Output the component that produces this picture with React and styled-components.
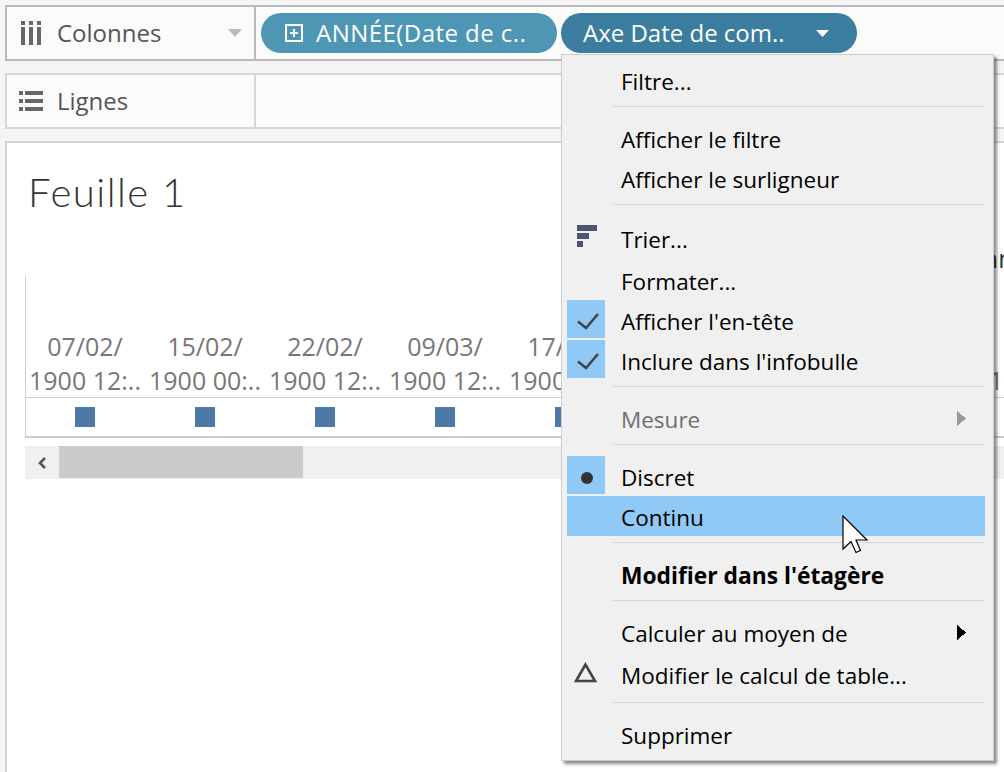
import React from 'react'
import styled, { createGlobalStyle } from 'styled-components';

const GlobalStyle = createGlobalStyle`
  html, body {
    margin: 0;
    padding: 0;
    background: #f5f5f5;
  }
`;

const Page = styled.div`
  position: relative;
  width: 1004px;
  height: 772px;
  overflow: hidden;
  box-sizing: border-box;
  padding: 5px 0 0 5px;
  background: #f5f5f5;
  font-family: "Open Sans", "Liberation Sans", sans-serif;
`;

const Shelf = styled.div`
  display: flex;
  box-sizing: border-box;
  width: 1010px;
  height: ${p => p.$h}px;
  margin-bottom: ${p => p.$mb}px;
  border: 2px solid ${p => p.$active ? '#b9b9b9' : '#d6d6d6'};
  background: #fbfbfb;
`;

const ShelfLabel = styled.div`
  display: flex;
  align-items: center;
  box-sizing: border-box;
  width: 249px;
  flex-shrink: 0;
  padding-left: 12px;
  border-right: 2px solid ${p => p.$active ? '#b9b9b9' : '#d6d6d6'};
  color: #555;
  font-size: 24px;
`;

const ShelfText = styled.span`
  padding-bottom: 2px;
`;

const ShelfIcon = styled.svg`
  width: 26px;
  height: 26px;
  margin-right: 12px;
  flex-shrink: 0;
`;

const LabelArrow = styled.svg`
  margin-left: auto;
  margin-right: 12px;
`;

const Pills = styled.div`
  display: flex;
  gap: 4px;
  padding: 6px 0 0 5px;
`;

const Pill = styled.div`
  display: flex;
  align-items: center;
  box-sizing: border-box;
  width: 296px;
  height: 40px;
  padding-left: ${p => p.$pad}px;
  border-radius: 20px;
  background: ${p => p.$bg};
  color: #fff;
  font-size: 24px;
  letter-spacing: ${p => p.$ls || 0}px;
  white-space: nowrap;
`;

const PlusBox = styled.svg`
  margin-right: 13px;
`;

const PillArrow = styled.svg`
  margin-left: auto;
  margin-right: 28px;
`;

const Panel = styled.div`
  box-sizing: border-box;
  width: 1010px;
  height: 640px;
  padding: 0 0 0 18px;
  border: 2px solid #d6d6d6;
  background: #fff;
`;

const Title = styled.h1`
  margin: 22px 0 0 3px;
  height: 54px;
  color: #333;
  font-family: Lato, "Open Sans", sans-serif;
  font-size: 40px;
  line-height: 54px;
  font-weight: 300;
  letter-spacing: 1.5px;
`;

const AxisTitle = styled.div`
  height: 36px;
  margin-top: 21px;
  padding-left: 942px;
  box-sizing: border-box;
  color: #333;
  font-size: 25px;
  line-height: 36px;
  white-space: nowrap;
`;

const Chart = styled.div`
  border-left: 1px solid #d0d0d0;
  border-bottom: 2px solid #cdcdcd;
  width: 1200px;
`;

const Headers = styled.div`
  display: flex;
  align-items: flex-end;
  height: 121px;
  margin-left: -1px;
  border-bottom: 1px solid #d0d0d0;
`;

const Marks = styled.div`
  display: flex;
  height: 38px;
  margin-left: -1px;
`;

const Column = styled.div`
  width: 120px;
  flex-shrink: 0;
  display: flex;
  justify-content: center;
  align-items: center;
`;

const HeaderCell = styled(Column)`
  flex-direction: column;
  color: #777;
  font-size: 25px;
  line-height: 34px;
  white-space: nowrap;
`;

const Mark = styled.div`
  width: 20px;
  height: 20px;
  background: #4e79a7;
`;

const Scrollbar = styled.div`
  display: flex;
  height: 33px;
  width: 1200px;
  margin-top: 8px;
  background: #f0f0f0;
`;

const ScrollButton = styled.div`
  display: flex;
  align-items: center;
  justify-content: center;
  width: 34px;
`;

const ScrollThumb = styled.div`
  width: 244px;
  height: 32px;
  background: #cbcbcb;
`;

const Menu = styled.div`
  position: absolute;
  left: 561px;
  top: 54px;
  width: 433px;
  height: 707px;
  box-sizing: border-box;
  padding: 5px 8px 0 5px;
  border: 1px solid #cccccc;
  background: #f0f0f0;
  box-shadow: 3px 3px 3px rgba(0, 0, 0, 0.45);
  color: #000;
  font-size: 22.5px;
`;

const Row = styled.div`
  display: flex;
  height: ${p => p.$h || 40}px;
  padding-right: 19px;
  background: ${p => p.$hot ? '#90c8f6' : 'transparent'};
  color: ${p => p.$muted ? '#6f6f6f' : '#000'};
  font-weight: ${p => p.$bold ? 700 : 400};
  font-size: ${p => p.$bold ? 22.8 : 22.5}px;
  white-space: nowrap;
`;

const Slot = styled.div`
  width: 38px;
  height: 38px;
  margin-right: 16px;
  flex-shrink: 0;
  background: ${p => p.$on ? '#90c8f6' : 'transparent'};
`;

const Label = styled.span`
  align-self: center;
  padding-top: 2px;
`;

const SubArrow = styled.svg`
  align-self: center;
  margin-left: auto;
`;

const Separator = styled.div`
  height: 1px;
  margin: 6px 0 ${p => p.$mb || 11}px 46px;
  background: #d6d6d6;
`;

const Cursor = styled.svg`
  position: absolute;
  left: 842px;
  top: 515px;
`;

const ticks = [
  ['07/02/', '1900 12:..'],
  ['15/02/', '1900 00:..'],
  ['22/02/', '1900 12:..'],
  ['09/03/', '1900 12:..'],
  ['17/03/', '1900 00:..'],
  ['24/03/', '1900 12:..'],
  ['07/04/', '1900 12:..'],
  ['15/04/', '1900 00:..'],
  ['22/04/', '1900 12:..'],
];

const ColumnsIcon = () => (
  <ShelfIcon viewBox="0 0 26 26" fill="#666">
    <path d="M2 1h4v4H2zM2 7h4v18H2zM10 1h4v4h-4zM10 7h4v18h-4zM18 1h4v4h-4zM18 7h4v18h-4z" />
  </ShelfIcon>
);

const RowsIcon = () => (
  <ShelfIcon viewBox="0 0 26 26" fill="#666">
    <path d="M0 3h4v4H0zM6 3h18v4H6zM0 11h4v4H0zM6 11h18v4H6zM0 19h4v4H0zM6 19h18v4H6z" />
  </ShelfIcon>
);

const CheckIcon = () => (
  <svg width="38" height="38" fill="none" stroke="#444" strokeWidth="2.6">
    <path d="M11 21.5l8 6.5L31 14" />
  </svg>
);

const DotIcon = () => (
  <svg width="38" height="38" fill="#333">
    <circle cx="20" cy="22" r="6" />
  </svg>
);

const SortIcon = () => (
  <svg width="38" height="38" fill="#4a566e">
    <path d="M10 9h20v6H10zM10 17h12v6H10zM10 25h6v6h-6z" />
  </svg>
);

const DeltaIcon = () => (
  <svg width="38" height="38" fill="none" stroke="#444" strokeWidth="2.6">
    <path d="M18.5 12.5L9 29h19z" />
  </svg>
);

const Arrow = ({ color }) => (
  <SubArrow width="9" height="15" shapeRendering="crispEdges">
    <path d="M0 0l9 7.5L0 15z" fill={color} />
  </SubArrow>
);

export default function App() {
  return (
    <Page>
      <GlobalStyle />
      <Shelf $h={56} $mb={12} $active>
        <ShelfLabel $active>
          <ColumnsIcon />
          <ShelfText>Colonnes</ShelfText>
          <LabelArrow width="14" height="8"><path d="M0 0h14L7 8z" fill="#bbb" /></LabelArrow>
        </ShelfLabel>
        <Pills>
          <Pill $bg="#4d97b5" $pad={24} $ls={0.45}>
            <PlusBox width="18" height="18" fill="none" stroke="#fff" strokeWidth="2">
              <path d="M1 1h16v16H1zM5 9h8M9 5v8" />
            </PlusBox>
            <ShelfText>ANNÉE(Date de c..</ShelfText>
          </Pill>
          <Pill $bg="#3a7d9e" $pad={22}>
            <ShelfText>Axe Date de com..</ShelfText>
            <PillArrow width="13" height="7"><path d="M0 0h13L6.5 7z" fill="#fff" /></PillArrow>
          </Pill>
        </Pills>
      </Shelf>
      <Shelf $h={56} $mb={12}>
        <ShelfLabel>
          <RowsIcon />
          <ShelfText>Lignes</ShelfText>
        </ShelfLabel>
      </Shelf>
      <Panel>
        <Title>Feuille 1</Title>
        <AxisTitle>Année de Date de commande</AxisTitle>
        <Chart>
          <Headers>
            {ticks.map(([day, time], i) => (
              <HeaderCell key={i}>
                <span>{day}</span>
                <span>{time}</span>
              </HeaderCell>
            ))}
          </Headers>
          <Marks>
            {ticks.map((_, i) => (
              <Column key={i}><Mark /></Column>
            ))}
          </Marks>
        </Chart>
        <Scrollbar>
          <ScrollButton>
            <svg width="10" height="12" fill="none" stroke="#555" strokeWidth="2.6"><path d="M8 1L3 6l5 5" /></svg>
          </ScrollButton>
          <ScrollThumb />
        </Scrollbar>
      </Panel>

      <Menu>
        <Row><Slot /><Label>Filtre...</Label></Row>
        <Separator />
        <Row><Slot /><Label>Afficher le filtre</Label></Row>
        <Row><Slot /><Label>Afficher le surligneur</Label></Row>
        <Separator />
        <Row $h={44}><Slot><SortIcon /></Slot><Label>Trier...</Label></Row>
        <Row><Slot /><Label>Formater...</Label></Row>
        <Row><Slot $on><CheckIcon /></Slot><Label>Afficher l'en-tête</Label></Row>
        <Row><Slot $on><CheckIcon /></Slot><Label>Inclure dans l'infobulle</Label></Row>
        <Separator />
        <Row $muted><Slot /><Label>Mesure</Label><Arrow color="#999" /></Row>
        <Separator />
        <Row><Slot $on><DotIcon /></Slot><Label>Discret</Label></Row>
        <Row $hot><Slot /><Label>Continu</Label></Row>
        <Separator />
        <Row $bold><Slot /><Label>Modifier dans l'étagère</Label></Row>
        <Separator />
        <Row><Slot /><Label>Calculer au moyen de</Label><Arrow color="#000" /></Row>
        <Row $h={44}><Slot><DeltaIcon /></Slot><Label>Modifier le calcul de table...</Label></Row>
        <Separator />
        <Row><Slot /><Label>Supprimer</Label></Row>
      </Menu>

      <Cursor width="28" height="40">
        <path d="M1 1v33l8-7.5 5 11 4.5-2-4.5-10.5h11z" fill="#fff" stroke="#000" strokeWidth="1.2" />
      </Cursor>
    </Page>
  )
}
